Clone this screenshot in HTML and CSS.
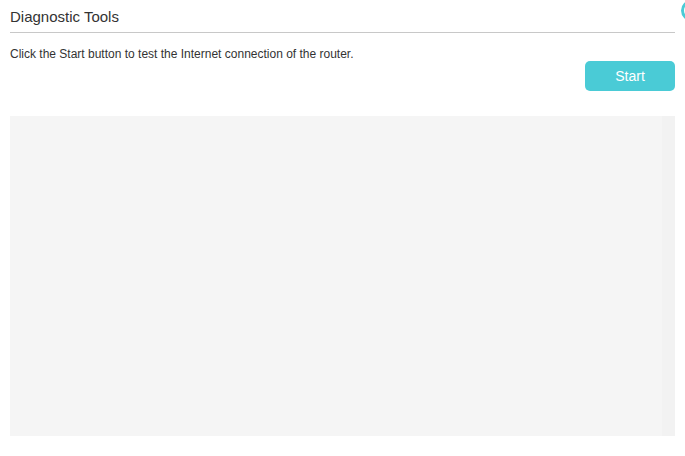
FILE: index.html
```html
<!DOCTYPE html>
<html lang="en">
<head>
    <meta charset="UTF-8">
    <title>Diagnostic Tools</title>
    <link rel="stylesheet" href="styles.css">
</head>
<body>
    <div class="help-icon"></div>
    <div class="container">
        <h2 class="title">Diagnostic Tools</h2>
        <p class="hint">Click the Start button to test the Internet connection of the router.</p>
        <div class="actions">
            <button class="start-btn" type="button">Start</button>
        </div>
        <div class="result-panel">
            <div class="result-scroll"></div>
        </div>
    </div>
</body>
</html>
```

FILE: styles.css
```css
html, body {
    height: 100%;
}

body {
    margin: 0;
    position: relative;
    overflow: hidden;
    background: #ffffff;
    color: #333333;
    font-family: "Liberation Sans", Arial, sans-serif;
}

.container {
    width: 665px;
    padding-left: 10px;
}

.title {
    margin: 0;
    height: 32px;
    line-height: 34px;
    font-size: 15px;
    font-weight: normal;
    border-bottom: 1px solid #c8c8c8;
}

.hint {
    margin: 14px 0 0;
    line-height: 14px;
    font-size: 12px;
}

.actions {
    display: flex;
    justify-content: flex-end;
}

.start-btn {
    width: 90px;
    height: 30px;
    padding: 0;
    border: 0;
    border-radius: 5px;
    background: #4acbd6;
    color: #ffffff;
    font-family: inherit;
    font-size: 14px;
}

.result-panel {
    display: flex;
    justify-content: flex-end;
    height: 320px;
    margin-top: 25px;
    background: #f5f5f5;
}

.result-scroll {
    width: 13px;
    background: #f2f2f2;
}

.help-icon {
    position: absolute;
    top: 0;
    left: 681px;
    width: 15px;
    height: 15px;
    border: 3px solid #4acbd6;
    border-radius: 50%;
}
```
